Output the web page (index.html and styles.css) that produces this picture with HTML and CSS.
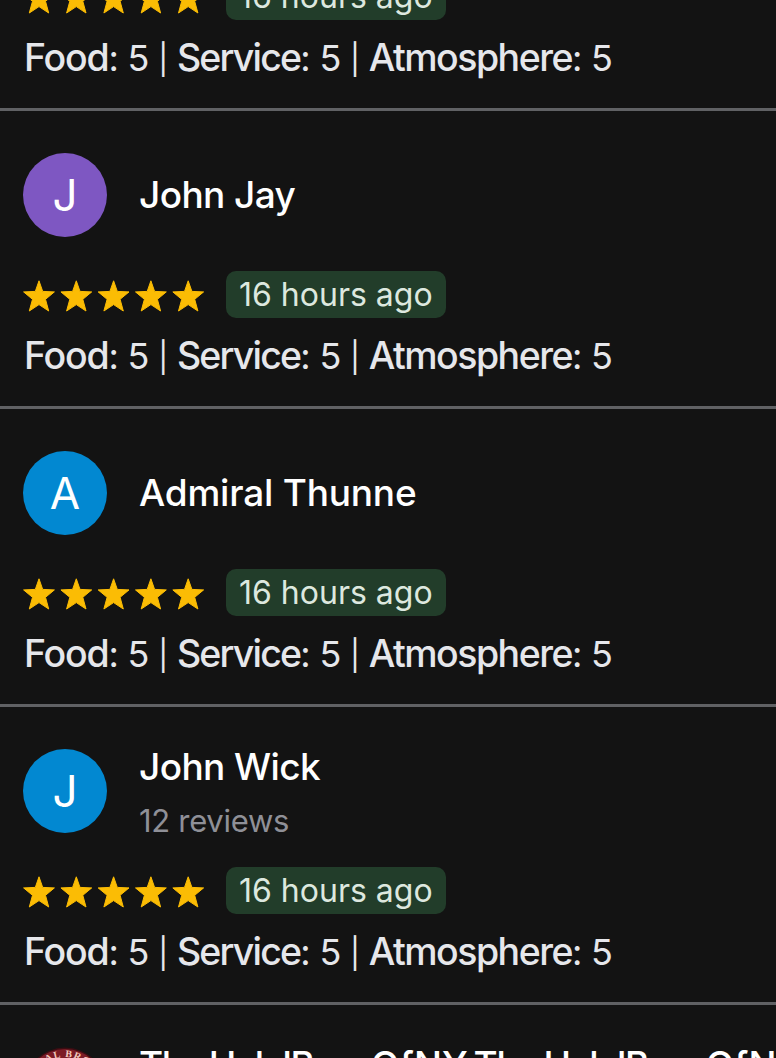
FILE: index.html
```
<!DOCTYPE html>
<html lang="en">
<head>
    <meta charset="UTF-8">
    <meta name="viewport" content="width=device-width, initial-scale=1.0">
    <title>Reviews</title>
    <link rel="stylesheet" href="styles.css">
</head>
<body>
    <!-- star shape shared by every rating -->
    <svg class="defs" width="0" height="0">
        <symbol id="star" viewBox="0 0 32 32">
            <path d="M16 0.8 L19.7 11.4 L31.4 11.9 L22.5 19.3 L25.7 31 L16 24.6 L6.3 31 L9.5 19.3 L0.6 11.9 L12.3 11.4 Z" stroke="#fbbc04" stroke-width="1" stroke-linejoin="round"/>
        </symbol>
        <symbol id="stars" viewBox="0 0 182 32">
            <use href="#star" x="0" width="32" height="32"/>
            <use href="#star" x="37.3" width="32" height="32"/>
            <use href="#star" x="74.6" width="32" height="32"/>
            <use href="#star" x="111.9" width="32" height="32"/>
            <use href="#star" x="149.2" width="32" height="32"/>
        </symbol>
    </svg>

    <div class="reviews">
        <div class="review">
            <div class="author"></div>
            <div class="rating">
                <svg class="stars"><use href="#stars"/></svg>
                <span class="time">16 hours ago</span>
            </div>
            <p class="scores"><b class="food">Food</b>: 5 <i>|</i> <b class="service">Service</b>: 5 <i>|</i> <b>Atmosphere</b>: 5</p>
        </div>

        <div class="review">
            <div class="author">
                <div class="avatar purple">J</div>
                <div class="name">John Jay</div>
            </div>
            <div class="rating">
                <svg class="stars"><use href="#stars"/></svg>
                <span class="time">16 hours ago</span>
            </div>
            <p class="scores"><b class="food">Food</b>: 5 <i>|</i> <b class="service">Service</b>: 5 <i>|</i> <b>Atmosphere</b>: 5</p>
        </div>

        <div class="review">
            <div class="author">
                <div class="avatar blue">A</div>
                <div class="name long">Admiral Thunne</div>
            </div>
            <div class="rating">
                <svg class="stars"><use href="#stars"/></svg>
                <span class="time">16 hours ago</span>
            </div>
            <p class="scores"><b class="food">Food</b>: 5 <i>|</i> <b class="service">Service</b>: 5 <i>|</i> <b>Atmosphere</b>: 5</p>
        </div>

        <div class="review">
            <div class="author">
                <div class="avatar blue">J</div>
                <div class="details">
                    <div class="name">John Wick</div>
                    <div class="count">12 reviews</div>
                </div>
            </div>
            <div class="rating">
                <svg class="stars"><use href="#stars"/></svg>
                <span class="time">16 hours ago</span>
            </div>
            <p class="scores"><b class="food">Food</b>: 5 <i>|</i> <b class="service">Service</b>: 5 <i>|</i> <b>Atmosphere</b>: 5</p>
        </div>

        <div class="review">
            <div class="author">
                <svg class="avatar" viewBox="0 0 84 84">
                    <circle cx="42" cy="42" r="41.5" fill="#3a0d12"/>
                    <circle cx="42" cy="42" r="40" fill="#7c1c26"/>
                    <path id="arc" d="M10 42 A32 32 0 0 1 74 42" fill="none"/>
                    <text class="badge-text"><textPath href="#arc" startOffset="53%" text-anchor="middle">AL BRO</textPath></text>
                </svg>
                <div class="details">
                    <div class="name tight">The HalalBros <span>OfNY</span> The HalalBros <span>OfNY</span></div>
                    <div class="count">&nbsp;</div>
                </div>
            </div>
        </div>
    </div>
</body>
</html>
```
FILE: styles.css
```
* {
    box-sizing: border-box;
}
body {
    margin: 0;
    height: 1058px;
    overflow: hidden;
    background-color: #131313;
    color: #e6e7eb;
    font-family: Inter, Roboto, sans-serif;
}
.defs {
    display: block;
}
/* list is scrolled part way through the first review */
.reviews {
    margin-top: -187px;
}
.review {
    height: 298px;
    padding: 42px 0 0 23px;
    border-bottom: 3px solid #606164;
}
.author {
    display: flex;
    align-items: center;
    gap: 32px;
    height: 84px;
    margin-bottom: 34px;
}
.avatar {
    flex: none;
    width: 84px;
    height: 84px;
    border-radius: 50%;
    color: #fff;
    font-size: 44px;
    line-height: 85px;
    text-align: center;
}
.purple {
    background-color: #7e57c2;
}
.blue {
    background-color: #0288d1;
}
.details {
    padding-top: 6px;
}
.name {
    color: #fff;
    font-size: 37px;
    font-weight: 500;
    line-height: 54px;
    letter-spacing: -0.6px;
    white-space: nowrap;
}
.name.long {
    letter-spacing: -0.2px;
}
.name.tight {
    letter-spacing: -1.3px;
    word-spacing: -3px;
}
.name.tight span {
    letter-spacing: 0.2px;
}
.count {
    color: #8f9097;
    font-size: 31px;
    line-height: 54px;
    letter-spacing: -0.3px;
}
.rating {
    display: flex;
    align-items: center;
    gap: 21px;
    height: 47px;
}
.stars {
    width: 182px;
    height: 32px;
    margin-top: 2px;
    fill: #fbbc04;
}
.time {
    width: 220px;
    height: 47px;
    padding-left: 13px;
    border-radius: 10px;
    background-color: #223d2a;
    color: #dde8df;
    font-size: 32px;
    line-height: 47px;
    white-space: nowrap;
}
.scores {
    margin: 13px 0 0 1px;
    font-size: 36px;
    line-height: 50px;
    letter-spacing: -1px;
    word-spacing: 0.6px;
    white-space: nowrap;
}
.scores b {
    font-size: 37.5px;
    font-weight: 550;
    letter-spacing: -1.5px;
}
.scores .food {
    letter-spacing: -1.2px;
}
.scores .service {
    letter-spacing: -1.8px;
}
.scores i {
    position: relative;
    top: -1px;
    font-size: 30px;
    font-style: normal;
}
.badge-text {
    fill: #f0c9bd;
    font-family: "Liberation Serif", serif;
    font-size: 10px;
    font-weight: bold;
    letter-spacing: 1.2px;
}
```
